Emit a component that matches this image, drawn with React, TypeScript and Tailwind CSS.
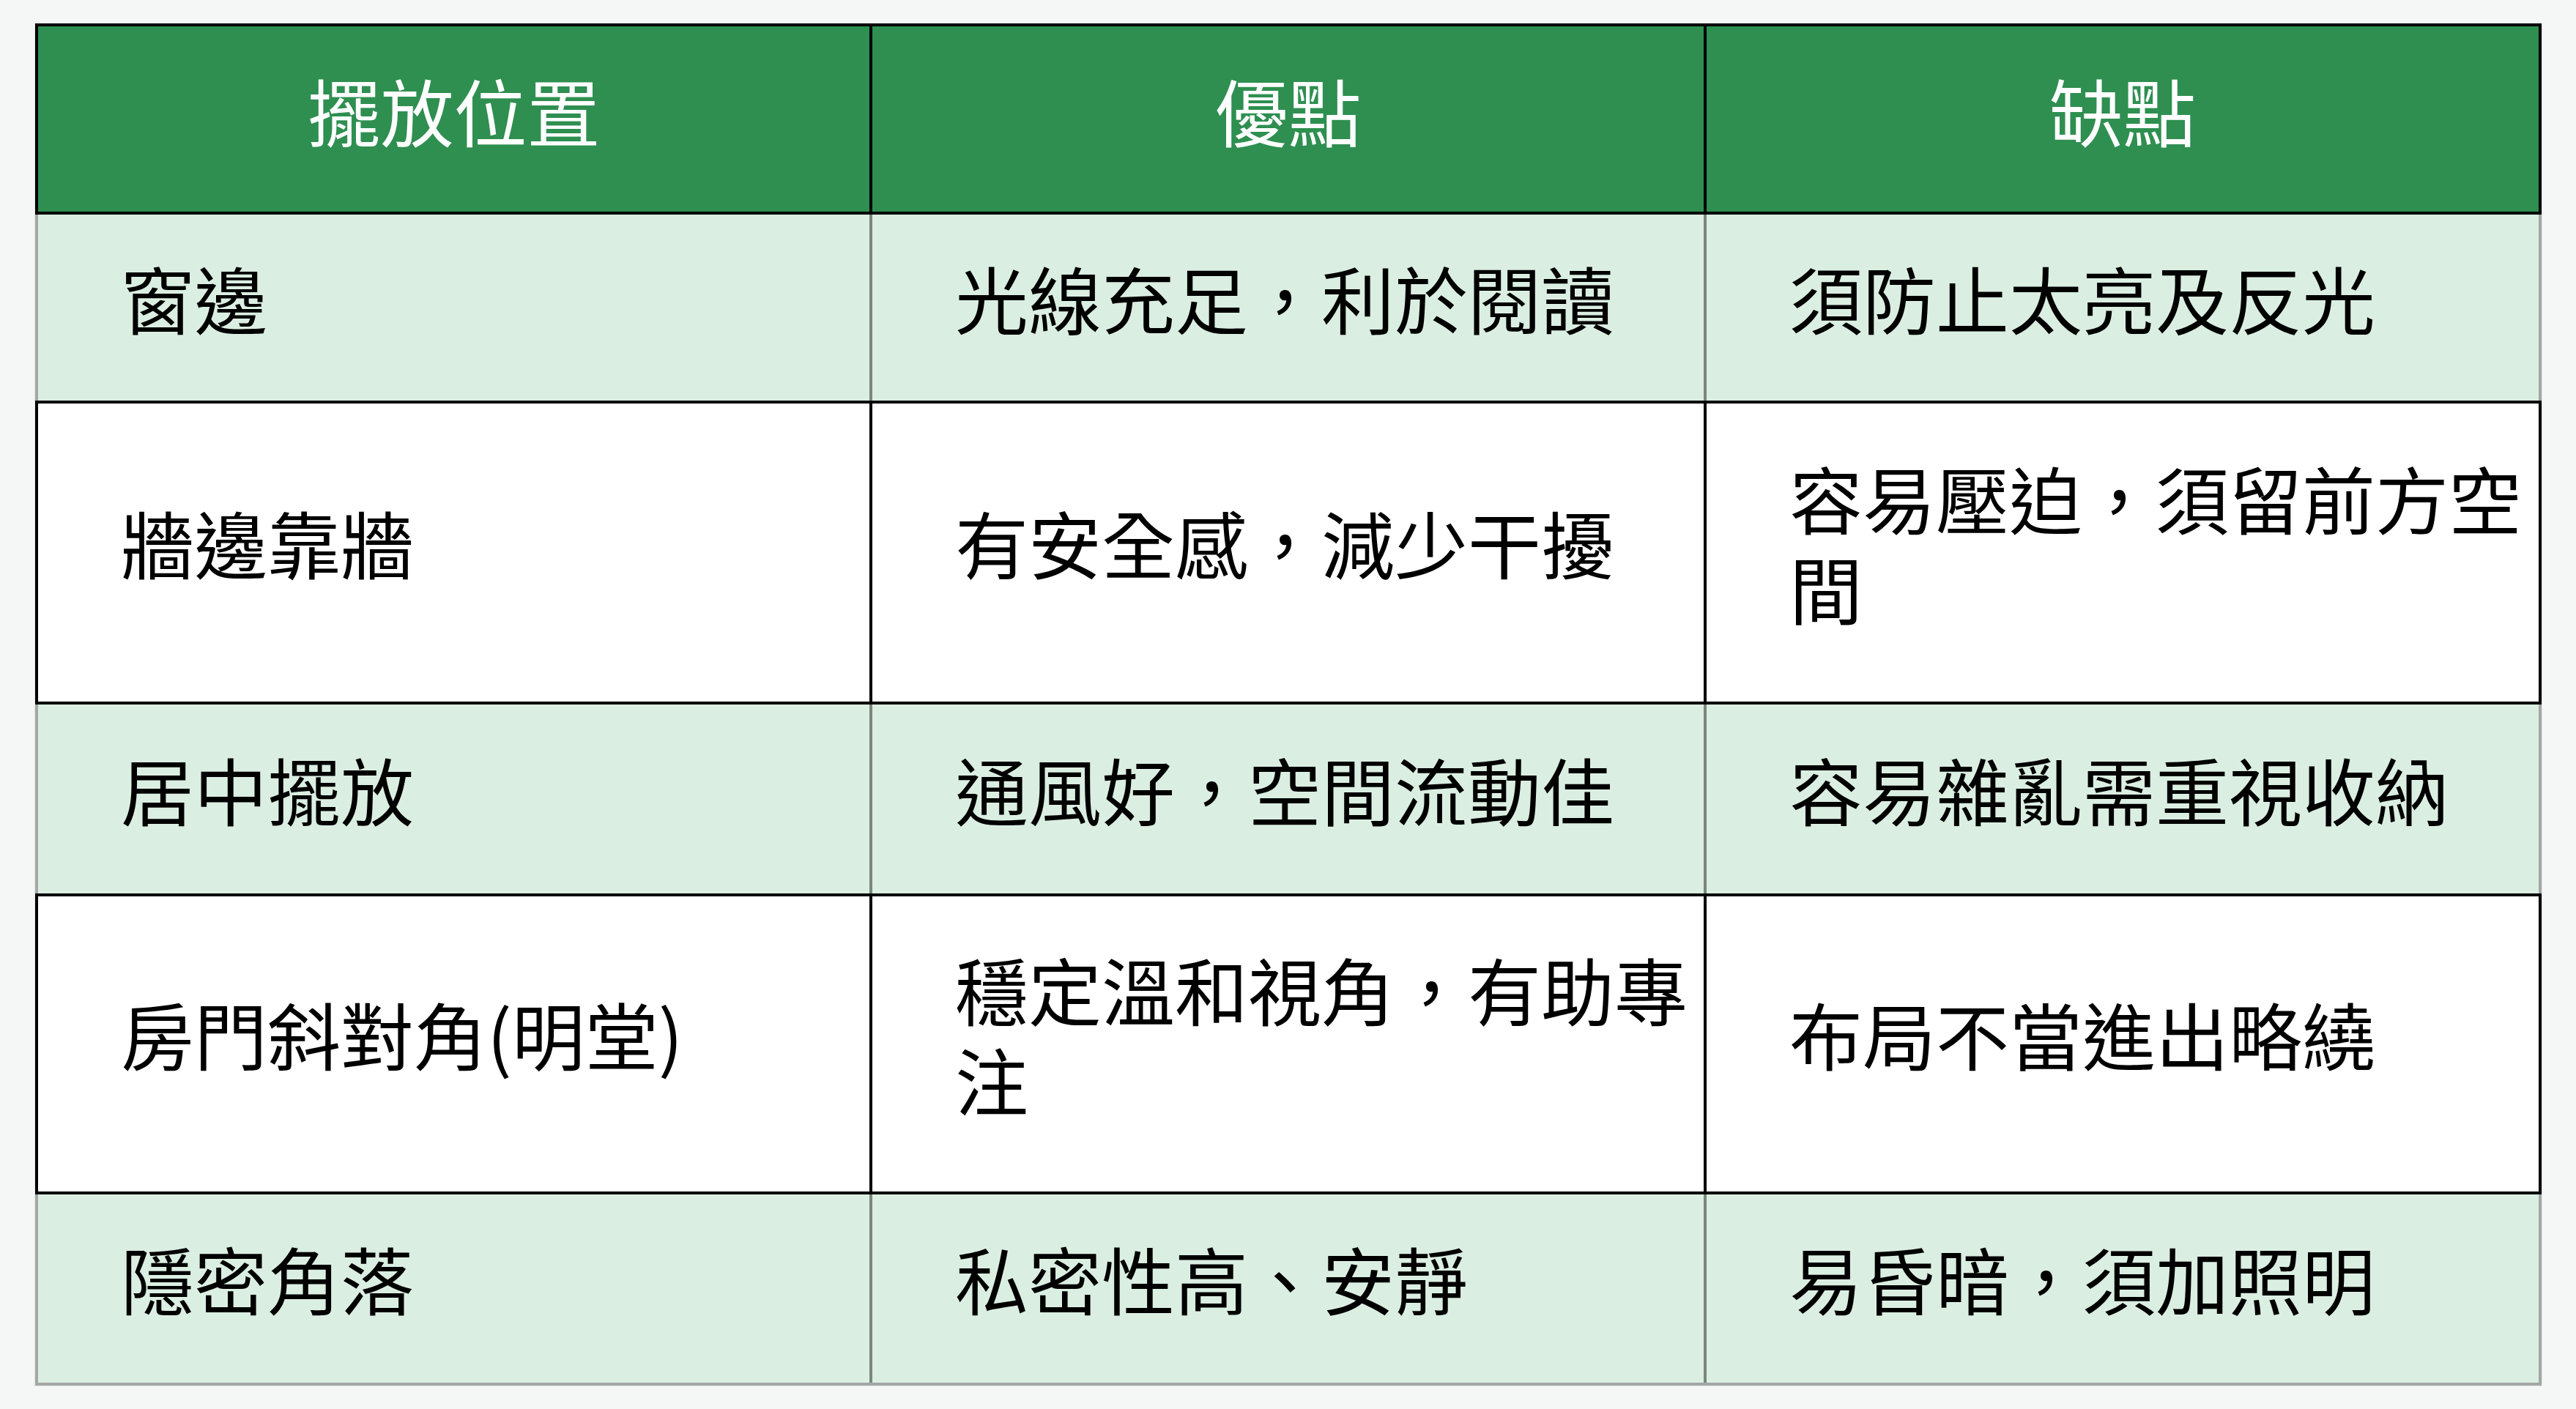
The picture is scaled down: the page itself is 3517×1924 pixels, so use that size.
const header = ["擺放位置", "優點", "缺點"];

const rows = [
  { cells: ["窗邊", "光線充足，利於閱讀", "須防止太亮及反光"], tint: true, h: "h-[254px]" },
  { cells: ["牆邊靠牆", "有安全感，減少干擾", "容易壓迫，須留前方空間"], tint: false, h: "h-[415px]" },
  { cells: ["居中擺放", "通風好，空間流動佳", "容易雜亂需重視收納"], tint: true, h: "h-[258px]" },
  { cells: ["房門斜對角(明堂)", "穩定溫和視角，有助專注", "布局不當進出略繞"], tint: false, h: "h-[411px]" },
  { cells: ["隱密角落", "私密性高、安靜", "易昏暗，須加照明"], tint: true, h: "h-[261px]", last: true },
];

const widths = ["w-[1139px]", "w-[1139px]", "w-[1136px]"];

export default function App() {
  return (
    <div
      className="min-h-screen bg-[#f4f7f6] pt-[31px] pl-[47px]"
      style={{ fontFamily: '"Noto Sans CJK TC", "Noto Sans", sans-serif' }}
    >
      <div className="w-[3424px] border border-[#e1e6e3]">
        {/* header */}
        <div className="flex h-[261px] border-4 border-black bg-[#2e8f50] divide-x-4 divide-black">
          {header.map((t, i) => (
            <div
              key={t}
              className={`${widths[i]} flex shrink-0 items-center justify-center pb-[26px] text-[100px] leading-[123px] text-white`}
            >
              {t}
            </div>
          ))}
        </div>

        {rows.map((r, ri) => (
          <div
            key={ri}
            className={
              r.tint
                ? `flex ${r.h} border-x-4 border-[#a3a7a5] bg-[#dbeee2] divide-x-4 divide-[#7c867f] ${r.last ? "border-b-4" : ""}`
                : `flex ${r.h} border-4 border-black bg-white divide-x-4 divide-black`
            }
          >
            {r.cells.map((c, i) => (
              <div
                key={i}
                className={`${widths[i]} flex shrink-0 items-center pl-[113px] pr-[12px] pb-[30px] text-[100px] leading-[123px] text-black`}
              >
                <span>{c}</span>
              </div>
            ))}
          </div>
        ))}
      </div>
    </div>
  );
}
